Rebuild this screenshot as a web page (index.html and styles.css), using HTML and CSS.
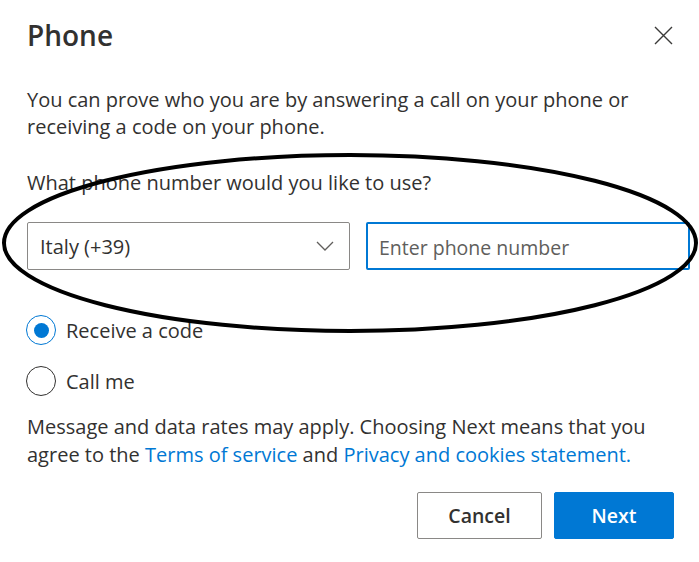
FILE: index.html
```html
<!DOCTYPE html>
<html lang="en">
<head>
<meta charset="utf-8">
<title>Phone</title>
<link rel="stylesheet" href="styles.css">
</head>
<body>
<div class="dialog">
  <div class="header">
    <h1 class="title">Phone</h1>
    <button class="close" aria-label="Close">
      <svg width="19" height="19" viewBox="0 0 19 19"><path d="M1 1 L18 18 M18 1 L1 18" stroke="#3b3a39" stroke-width="1.4" fill="none"/></svg>
    </button>
  </div>
  <p class="intro">You can prove who you are by answering a call on your phone or receiving a code on your phone.</p>
  <p class="question">What phone number would you like to use?</p>
  <div class="fields">
    <div class="select">
      <span>Italy (+39)</span>
      <svg width="18" height="10" viewBox="0 0 18 10"><path d="M1 1 L9 9 L17 1" stroke="#605e5c" stroke-width="1.3" fill="none"/></svg>
    </div>
    <div class="input"><span class="placeholder">Enter phone number</span></div>
  </div>
  <div class="radios">
    <div class="radio-row"><span class="radio checked"><span class="dot"></span></span><span>Receive a code</span></div>
    <div class="radio-row"><span class="radio"></span><span>Call me</span></div>
  </div>
  <p class="terms"><span>Message and data rates may apply. Choosing Next means that you</span><br><span>agree to the</span> <a class="link">Terms of service</a> <span>and</span> <a class="link">Privacy and cookies statement.</a></p>
  <div class="actions">
    <button class="btn cancel">Cancel</button>
    <button class="btn next">Next</button>
  </div>
</div>
<svg class="annotation" width="699" height="562" viewBox="0 0 699 562">
  <ellipse cx="350" cy="243" rx="346" ry="88" fill="none" stroke="#000" stroke-width="4"/>
</svg>
</body>
</html>
```

FILE: styles.css
```css
* { box-sizing: border-box; }
html, body { margin: 0; padding: 0; background: #fff; }
body {
  width: 699px;
  height: 562px;
  overflow: hidden;
  position: relative;
  font-family: "Open Sans", "Noto Sans", sans-serif;
  color: #323130;
}
.dialog {
  padding: 14px 26px 0 27px;
}
.header {
  display: flex;
  justify-content: space-between;
  align-items: center;
  height: 42px;
}
.title {
  margin: 0;
  font-size: 28px;
  font-weight: 600;
  line-height: 42px;
  color: #323130;
}
.close {
  border: 0;
  background: none;
  padding: 0;
  width: 19px;
  height: 19px;
  display: flex;
  margin-top: 1px;
}
.intro, .question, .terms {
  margin: 0;
  font-size: 20px;
  line-height: 27px;
}
.intro { margin-top: 30px; width: 620px; }
.question { margin-top: 29px; }
.fields {
  display: flex;
  gap: 16px;
  margin-top: 26px;
  width: 663px;
}
.select, .input {
  height: 48px;
  border-radius: 2px;
  display: flex;
  align-items: center;
  font-size: 20px;
}
.select {
  width: 323px;
  border: 1px solid #8a8886;
  padding: 0 15px 0 12px;
  justify-content: space-between;
}
.input {
  width: 324px;
  border: 2px solid #0078d4;
  padding: 0 11px;
}
.placeholder { color: #605e5c; font-size: 19.5px; padding-top: 2px; }
.radios {
  margin-top: 45px;
  display: flex;
  flex-direction: column;
  gap: 21px;
}
.radio-row {
  display: flex;
  align-items: center;
  gap: 10px;
  height: 30px;
  font-size: 20px;
  margin-left: -1px;
}
.radio {
  width: 30px;
  height: 30px;
  border-radius: 50%;
  border: 1px solid #323130;
  display: flex;
  align-items: center;
  justify-content: center;
}
.radio.checked { border-color: #0078d4; }
.dot {
  width: 15px;
  height: 15px;
  border-radius: 50%;
  background: #0078d4;
}
.terms {
  margin-top: 17px;
  line-height: 28px;
  width: 646px;
}
.link { color: #0078d4; text-decoration: none; }
.actions {
  display: flex;
  justify-content: flex-end;
  gap: 12px;
  margin-top: 23px;
  margin-right: -1px;
}
.btn {
  height: 47px;
  border-radius: 2px;
  font-family: "Open Sans", "Noto Sans", sans-serif;
  font-size: 19.5px;
  font-weight: 600;
  cursor: pointer;
}
.cancel {
  width: 125px;
  background: #fff;
  border: 1px solid #8a8886;
  color: #323130;
}
.next {
  width: 120px;
  background: #0078d4;
  border: 1px solid #0078d4;
  color: #fff;
}
.annotation {
  position: absolute;
  left: 0;
  top: 0;
  pointer-events: none;
}
```
